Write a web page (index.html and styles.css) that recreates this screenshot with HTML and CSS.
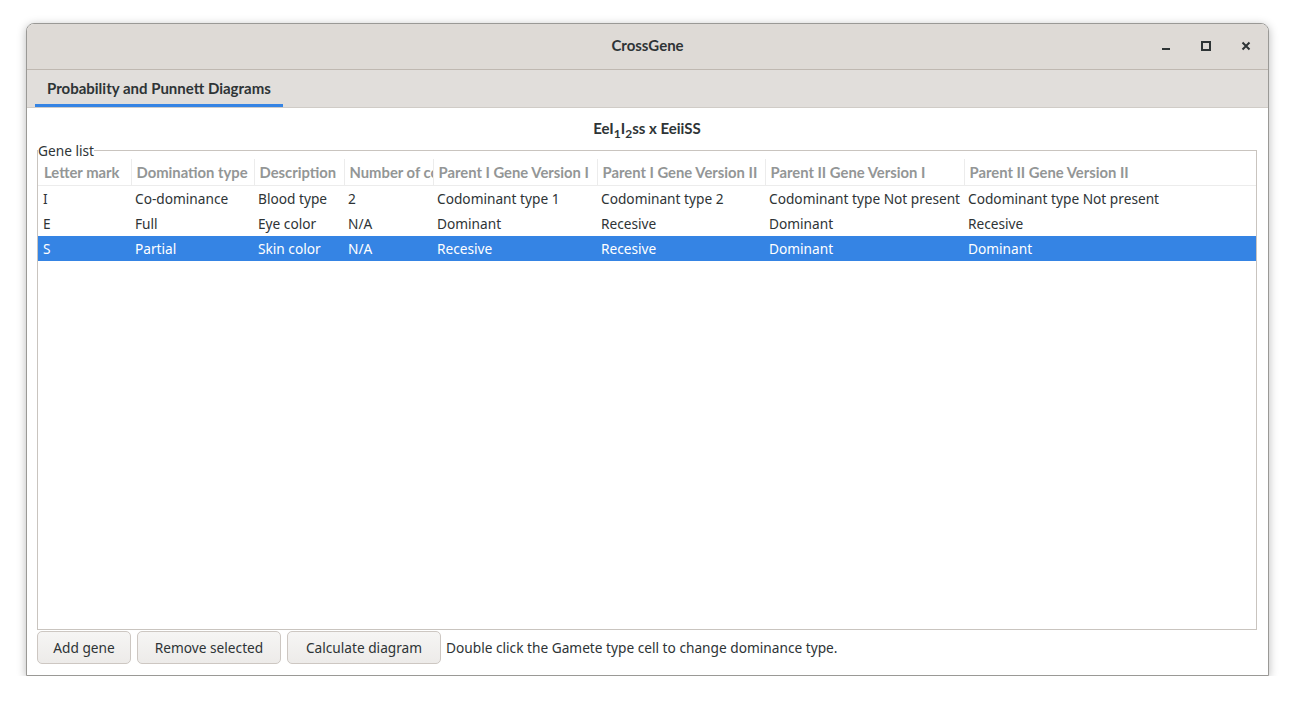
FILE: index.html
```html
<!DOCTYPE html>
<html>
<head>
<meta charset="utf-8">
<link rel="stylesheet" href="styles.css">
</head>
<body>
<div class="window">
  <header class="titlebar">
    <div class="title">CrossGene</div>
    <div class="controls">
      <span class="ctl"><svg width="16" height="16" viewBox="0 0 16 16"><rect x="4" y="10" width="8" height="2" fill="#2e3436"/></svg></span>
      <span class="ctl"><svg width="16" height="16" viewBox="0 0 16 16"><rect x="4" y="4" width="8" height="8" fill="none" stroke="#2e3436" stroke-width="2"/></svg></span>
      <span class="ctl"><svg width="16" height="16" viewBox="0 0 16 16"><path d="M4.5 4.5 L11.5 11.5 M11.5 4.5 L4.5 11.5" stroke="#2e3436" stroke-width="2"/></svg></span>
    </div>
  </header>
  <nav class="tabbar">
    <div class="tab active">Probability and Punnett Diagrams</div>
  </nav>
  <main class="content">
    <div class="formula">EeI<sub>1</sub>I<sub>2</sub>ss x EeiiSS</div>
    <fieldset class="frame">
      <legend>Gene list</legend>
      <table class="grid">
        <colgroup>
          <col class="c1"><col class="c2"><col class="c3"><col class="c4"><col class="c5"><col class="c6"><col class="c7"><col class="c8">
        </colgroup>
        <thead>
          <tr>
            <th>Letter mark</th><th>Domination type</th><th>Description</th><th>Number of codominant</th><th>Parent I Gene Version I</th><th>Parent I Gene Version II</th><th>Parent II Gene Version I</th><th>Parent II Gene Version II</th>
          </tr>
        </thead>
        <tbody>
          <tr><td>I</td><td>Co-dominance</td><td>Blood type</td><td>2</td><td>Codominant type 1</td><td>Codominant type 2</td><td>Codominant type Not present</td><td>Codominant type Not present</td></tr>
          <tr><td>E</td><td>Full</td><td>Eye color</td><td>N/A</td><td>Dominant</td><td>Recesive</td><td>Dominant</td><td>Recesive</td></tr>
          <tr class="selected"><td>S</td><td>Partial</td><td>Skin color</td><td>N/A</td><td>Recesive</td><td>Recesive</td><td>Dominant</td><td>Dominant</td></tr>
        </tbody>
      </table>
    </fieldset>
    <div class="actions">
      <button class="btn b1">Add gene</button>
      <button class="btn b2">Remove selected</button>
      <button class="btn b3">Calculate diagram</button>
      <span class="hint">Double click the Gamete type cell to change dominance type.</span>
    </div>
  </main>
</div>
</body>
</html>
```
FILE: styles.css
```css
html, body {
  margin: 0;
  padding: 0;
  background: #ffffff;
}
body {
  font-family: "Noto Sans", "Open Sans", sans-serif;
  font-size: 13.7px;
  color: #2e3436;
  padding: 23px 0 0 26px;
}
.window {
  width: 1241px;
  height: 651px;
  border: 1px solid #9a9996;
  border-radius: 8px 8px 0 0;
  box-shadow: 0 2px 10px rgba(0,0,0,0.28);
  display: flex;
  flex-direction: column;
  overflow: hidden;
  background: #ffffff;
}
.titlebar {
  height: 42px;
  flex: none;
  background: #dedad6;
  border-bottom: 1px solid #bfb8b1;
  display: flex;
  align-items: center;
  justify-content: center;
  position: relative;
  padding-bottom: 3px;
}
.title {
  font-family: "Lato", sans-serif;
  font-weight: bold;
  font-size: 15px;
  color: #2e3436;
}
.controls {
  position: absolute;
  right: 14px;
  top: 14px;
  display: flex;
  gap: 24px;
}
.ctl {
  width: 16px;
  height: 16px;
  display: block;
}
.ctl svg { display: block; }
.tabbar {
  height: 37px;
  flex: none;
  background: #e1dedb;
  border-bottom: 1px solid #d0ccc7;
  padding-left: 8px;
  display: flex;
  align-items: stretch;
}
.tab {
  padding: 2px 12px 0 12px;
  display: flex;
  align-items: center;
  font-family: "Lato", sans-serif;
  font-weight: bold;
  font-size: 15px;
  color: #2e3436;
  box-sizing: border-box;
  border-bottom: 3px solid #3584e4;
}
.content {
  flex: 1;
  display: flex;
  flex-direction: column;
  padding: 10px 11px 11px 10px;
  min-height: 0;
}
.formula {
  text-align: center;
  font-family: "Lato", sans-serif;
  font-weight: bold;
  font-size: 15px;
  line-height: 20px;
  height: 20px;
  margin-bottom: 4px;
}
.formula sub {
  font-size: 12px;
  line-height: 0;
  vertical-align: -4px;
}
.frame {
  flex: 1;
  margin: 0;
  padding: 0;
  border: 1px solid #c9c4bf;
  min-width: 0;
  min-height: 0;
  overflow: hidden;
}
.frame legend {
  padding: 0;
  margin-left: 0;
  line-height: 17px;
  color: #2e3436;
}
.grid {
  width: 100%;
  table-layout: fixed;
  border-collapse: collapse;
}
.c1 { width: 93px; }
.c2 { width: 123px; }
.c3 { width: 90px; }
.c4 { width: 89px; }
.c5 { width: 164px; }
.c6 { width: 168px; }
.c7 { width: 199px; }
.c8 { width: auto; }
.grid th {
  text-align: left;
  font-family: "Lato", sans-serif;
  font-weight: bold;
  font-size: 14.8px;
  color: #939696;
  height: 26px;
  padding: 0 0 0 5px;
  white-space: nowrap;
  overflow: hidden;
  border-left: 1px solid #ececec;
  border-bottom: 1px solid #ececec;
}
.grid th:first-child {
  border-left: none;
  padding-left: 6px;
}
.grid td {
  height: 25px;
  padding: 0 0 0 4px;
  white-space: nowrap;
  overflow: hidden;
  color: #2e3436;
}
.grid td:first-child { padding-left: 5px; }
.grid tr.selected td {
  background: #3584e4;
  color: #ffffff;
}
.actions {
  display: flex;
  align-items: center;
  margin-top: 1px;
  height: 33px;
  gap: 6px;
}
.btn {
  height: 33px;
  font-family: inherit;
  font-size: 13.7px;
  color: #2e3436;
  background: linear-gradient(#f6f5f4, #edebe9);
  border: 1px solid #cdc7c2;
  border-radius: 5px;
  padding: 0;
  white-space: nowrap;
  box-sizing: border-box;
}
.b1 { width: 94px; }
.b2 { width: 144px; }
.b3 { width: 154px; }
.hint {
  margin-left: -1px;
  color: #2e3436;
}
```
